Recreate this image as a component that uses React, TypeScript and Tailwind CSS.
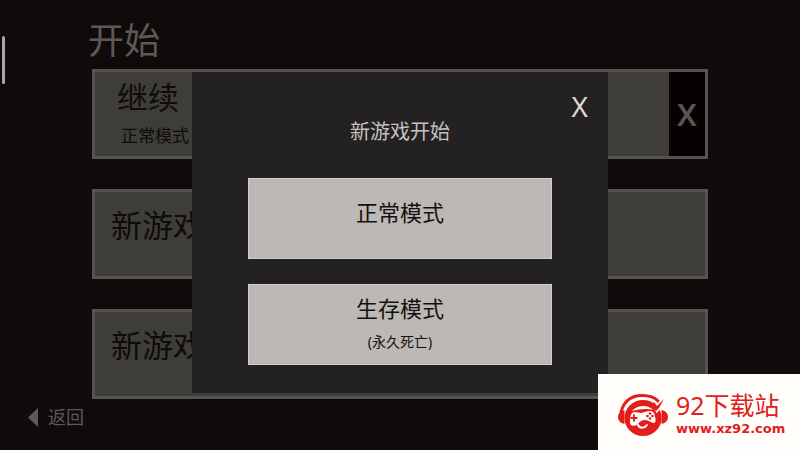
interface SaveSlot {
  id: number;
  title: string;
  mode?: string;
}

interface GameMode {
  title: string;
  note?: string;
}

const slots: SaveSlot[] = [
  { id: 1, title: '继续', mode: '正常模式' },
  { id: 2, title: '新游戏' },
  { id: 3, title: '新游戏' },
];

const modes: GameMode[] = [{ title: '正常模式' }, { title: '生存模式', note: '(永久死亡)' }];

const SlotRow = ({ slot }: { slot: SaveSlot }) => (
  <li className="flex h-[90px] border-[3px] border-[#555351] bg-[#3e3d39]">
    <button
      type="button"
      className={
        slot.mode
          ? 'flex flex-1 flex-col items-start pt-1 pl-[22px] text-left text-[#0f0c0a]'
          : 'flex flex-1 flex-col items-start pt-3 pl-4 text-left text-[#0f0c0a]'
      }
    >
      <span className="text-[31px] leading-[42px]">{slot.title}</span>
      {slot.mode && <span className="pl-1 text-[17px] leading-9">{slot.mode}</span>}
    </button>
    {slot.mode && (
      <button type="button" className="w-9 bg-[#070101] text-[31px] font-semibold text-[#575454]">
        X
      </button>
    )}
  </li>
);

const ModeDialog = () => (
  <div className="absolute inset-x-0 top-[72px] flex justify-center">
    <div
      role="dialog"
      aria-labelledby="dialog-title"
      className="relative w-[52%] bg-[#242122] px-14 pt-[42px] pb-7"
    >
      <button
        type="button"
        className="absolute top-4 right-5 text-[28px] leading-9 text-[#dcd9d8]"
      >
        X
      </button>
      <h2 id="dialog-title" className="text-center text-[20px] leading-9 text-[#c5c1bf]">
        新游戏开始
      </h2>
      <div className="mt-7 flex flex-col gap-[25px]">
        {modes.map((mode) => (
          <button
            key={mode.title}
            type="button"
            className="flex h-[81px] flex-col items-center border border-[#d3cfcd] bg-[#bcb8b5] pt-[6px] text-[#16110f]"
          >
            <span
              className={mode.note ? 'text-[22px] leading-[34px]' : 'mt-2 text-[22px] leading-[38px]'}
            >
              {mode.title}
            </span>
            {mode.note && <span className="text-[14px] leading-[34px]">{mode.note}</span>}
          </button>
        ))}
      </div>
    </div>
  </div>
);

const SiteLogo = () => (
  <svg className="h-[42px] w-[50px] shrink-0" viewBox="0 0 50 42" aria-hidden="true">
    {/* head */}
    <ellipse cx="25" cy="24" rx="18.500" ry="18" fill="#e51c1c" />
    {/* headband */}
    <path d="M5 20C7 10 14 4.500 25 4.500c7 0 12 2 15 6" fill="none" stroke="#fffefa" strokeWidth="2" />
    <path
      d="M3 18C6 7 13 1.500 24 1.500c8 0 13 2 16 5.500"
      fill="none"
      stroke="#e51c1c"
      strokeWidth="3"
      strokeLinecap="round"
    />
    {/* ear cups */}
    <path d="M6.500 16C2 17 0 20 0 23s2 6 6.500 7z" fill="#e51c1c" />
    <path d="M43.500 16c4.500 1 6.500 4 6.500 7s-2 6-6.500 7z" fill="#e51c1c" />
    {/* check mark on the band */}
    <path d="M36 10l3 5 8-10" fill="none" stroke="#fffefa" strokeWidth="5" />
    <path d="M36 8l3 4 7-7-5 9-3 3-5-5z" fill="#e51c1c" />
    {/* forehead */}
    <path d="M14 17c5-6 16-7 21-1-6-2-14-1-21 1z" fill="#fffefa" />
    {/* gamepad */}
    <path
      d="M14 19c3-2 6 0 9 0 5-1 10-4 13 0 1 3 3 9 0 10-3 0-5-3-9-3-3 0-5 1-7 4-3 3-8 2-8-1s0-8 2-10z"
      fill="#fffefa"
    />
    <path d="M12.500 24h7M16 20.500v7" stroke="#e51c1c" strokeWidth="1.900" />
    <circle cx="32" cy="19.500" r="1.300" fill="#e51c1c" />
    <circle cx="29.500" cy="22" r="1.300" fill="#e51c1c" />
    <circle cx="34.500" cy="22" r="1.300" fill="#e51c1c" />
    <circle cx="32" cy="24.500" r="1.300" fill="#e51c1c" />
    {/* smile */}
    <path d="M20 31c2 4 7 3 9 0" fill="none" stroke="#fffefa" strokeWidth="2" strokeLinecap="round" />
  </svg>
);

export default function App() {
  return (
    <div className="relative min-h-screen overflow-hidden bg-[#100b0b] font-['Noto_Sans','Noto_Sans_CJK_SC',sans-serif]">
      <div className="absolute top-9 left-[2px] h-12 w-[3px] rounded-full bg-[#aaa6a7]" />

      <main className="px-[11.5%] pt-5">
        <h1 className="-ml-1 text-[36px] leading-[42px] text-[#5f5857]">开始</h1>
        <ul className="mt-[7px] flex flex-col gap-[30px]">
          {slots.map((slot) => (
            <SlotRow key={slot.id} slot={slot} />
          ))}
        </ul>
      </main>

      <footer className="flex pt-1 pl-7">
        <a href="#back" className="flex items-center gap-[10px] text-[18px] leading-7 text-[#5f5a59]">
          <svg className="h-[19px] w-[10px]" viewBox="0 0 10 19" aria-hidden="true">
            <path d="M10 0v19L0 9.500z" fill="#5f5a59" />
          </svg>
          返回
        </a>
      </footer>

      <ModeDialog />

      <a
        href="#site"
        className="absolute right-0 bottom-0 flex h-[76px] w-[202px] items-center gap-2 bg-[#fffefa] pt-[6px] pl-5 text-[#e02020]"
      >
        <SiteLogo />
        <span className="flex flex-col">
          <span className="text-[25px] leading-7">92下载站</span>
          <span className="font-['DejaVu_Sans',sans-serif] text-[13px] leading-5 font-bold">
            www.xz92.com
          </span>
        </span>
      </a>
    </div>
  );
}
